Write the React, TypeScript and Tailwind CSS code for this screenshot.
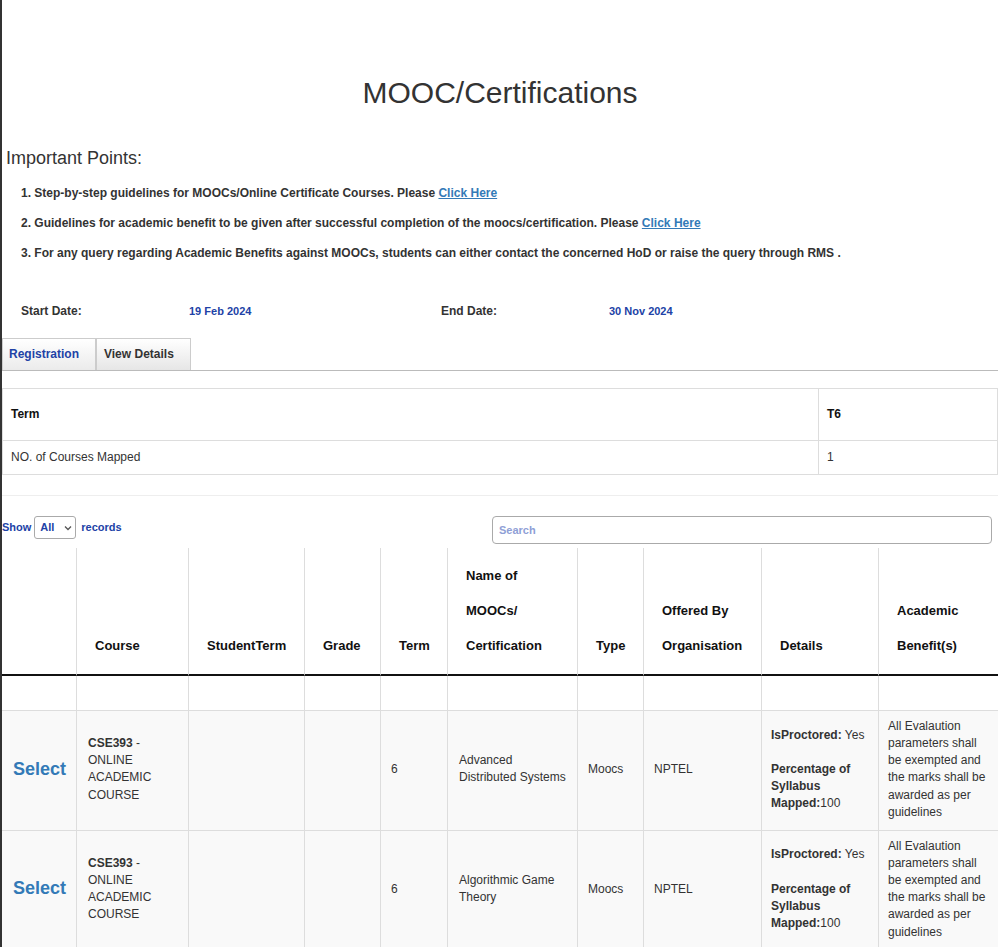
import React from "react";

const rows = [
  { name: ["Advanced", "Distributed Systems"] },
  { name: ["Algorithmic Game", "Theory"] },
];

const colWidths = [74, 112, 116, 76, 67, 130, 66, 118, 117, 120];

function HeaderCell({ lines, first }: { lines: string[]; first?: boolean }) {
  return (
    <th
      className={
        "align-bottom text-left text-[13px] font-bold leading-[35px] pt-[10px] pb-[11px] pl-[18px] pr-[4px] border-b-2 border-[#111] text-[#111] whitespace-nowrap " +
        (first ? "" : "border-l border-l-[#ddd]")
      }
    >
      {lines.map((l, i) => (
        <React.Fragment key={i}>
          {i > 0 && <br />}
          {l}
        </React.Fragment>
      ))}
    </th>
  );
}

export default function App() {
  return (
    <div className="min-h-[947px] bg-white border-l-2 border-[#333] overflow-hidden text-[#333] [font-family:'Liberation_Sans',Arial,Helvetica,sans-serif]">
      <h1 className="mt-[76px] text-center text-[30px] leading-[33px] font-normal text-[#333]">
        MOOC/Certifications
      </h1>

      <div className="mt-[39px] pl-[4px] text-[18px] leading-[20px] text-[#333]">
        Important Points:
      </div>

      <div className="mt-[10px] pl-[19px] text-[12px] font-bold leading-[30px] text-[#333]">
        <div>
          1. Step-by-step guidelines for MOOCs/Online Certificate Courses. Please{" "}
          <a className="text-[#337ab7] underline" href="#">
            Click Here
          </a>
        </div>
        <div>
          2. Guidelines for academic benefit to be given after successful completion of the moocs/certification. Please{" "}
          <a className="text-[#337ab7] underline" href="#">
            Click Here
          </a>
        </div>
        <div>
          3. For any query regarding Academic Benefits against MOOCs, students can either contact the concerned HoD or raise the query through RMS .
        </div>
      </div>

      <div className="mt-[33px] flex items-center pl-[19px] leading-[20px] font-bold">
        <div className="w-[168px] text-[12px] text-[#333]">Start Date:</div>
        <div className="w-[252px] text-[11px] text-[#2142a6]">19 Feb 2024</div>
        <div className="w-[168px] text-[12px] text-[#333]">End Date:</div>
        <div className="text-[11px] text-[#2142a6]">30 Nov 2024</div>
      </div>

      <div className="mt-[17px] flex border-b border-[#bbb]">
        <div className="flex h-[32px] w-[94px] items-center border border-b-0 border-[#ccc] bg-linear-to-b from-white to-[#ebebeb] pb-[2px] pl-[6px] text-[12px] font-bold text-[#2142a6]">
          Registration
        </div>
        <div className="flex h-[32px] w-[95px] items-center border border-b-0 border-[#ccc] bg-linear-to-b from-white to-[#e6e6e6] pb-[2px] pl-[7px] text-[12px] font-bold text-[#333]">
          View Details
        </div>
      </div>

      <div className="mt-[17px] border border-[#ddd] text-[12px]">
        <div className="flex h-[52px] border-b border-[#ddd]">
          <div className="flex w-[816px] items-center border-r border-[#ddd] pb-[2px] pl-[8px] font-bold text-[#111]">
            Term
          </div>
          <div className="flex items-center pb-[2px] pl-[8px] font-bold text-[#111]">T6</div>
        </div>
        <div className="flex h-[33px]">
          <div className="flex w-[816px] items-center border-r border-[#ddd] pb-[2px] pl-[8px] text-[#333]">
            NO. of Courses Mapped
          </div>
          <div className="flex items-center pb-[2px] pl-[8px] text-[#333]">1</div>
        </div>
      </div>

      <div className="mt-[20px] h-px bg-[#eee]" />

      <div className="mt-[20px] flex items-start">
        <div className="flex h-[23px] items-center text-[11px] font-bold text-[#2142a6]">
          <span>Show</span>
          <div className="ml-[3px] flex h-[23px] w-[42px] items-center rounded-[3px] border border-[#aaa] pl-[5px] text-[#2142a6]">
            <span>All</span>
            <svg className="ml-[10px]" width="8" height="6" viewBox="0 0 8 6">
              <path d="M1 1.5 L4 4.5 L7 1.5" fill="none" stroke="#555" strokeWidth="1.3" />
            </svg>
          </div>
          <span className="ml-[5px]">records</span>
        </div>
        <div className="ml-auto mr-[6px] flex h-[28px] w-[500px] items-center rounded-[4px] border border-[#aaa] pl-[6px] text-[11px] font-bold text-[#8fa0d6]">
          Search
        </div>
      </div>

      <table className="mt-[4px] w-[996px] table-fixed border-separate border-spacing-0 text-[12px] leading-[1.42857]">
        <colgroup>
          {colWidths.map((w, i) => (
            <col key={i} style={{ width: w }} />
          ))}
        </colgroup>
        <thead>
          <tr>
            <HeaderCell lines={[""]} first />
            <HeaderCell lines={["Course"]} />
            <HeaderCell lines={["StudentTerm"]} />
            <HeaderCell lines={["Grade"]} />
            <HeaderCell lines={["Term"]} />
            <HeaderCell lines={["Name of", "MOOCs/", "Certification"]} />
            <HeaderCell lines={["Type"]} />
            <HeaderCell lines={["Offered By", "Organisation"]} />
            <HeaderCell lines={["Details"]} />
            <HeaderCell lines={["Academic", "Benefit(s)"]} />
          </tr>
        </thead>
        <tbody>
          <tr>
            {colWidths.map((_, i) => (
              <td key={i} className={"h-[34px] " + (i > 0 ? "border-l border-[#ddd]" : "")} />
            ))}
          </tr>
          {rows.map((r, idx) => (
            <tr key={idx} className="bg-[#f9f9f9]">
              <td className="border-t border-[#ddd] pt-[7px] pb-[9px] pl-[11px] align-middle">
                <a href="#" className="text-[18px] font-bold text-[#337ab7]">
                  Select
                </a>
              </td>
              <td className="border-t border-l border-[#ddd] pt-[7px] pb-[9px] pl-[11px] align-middle text-[#333]">
                <b>CSE393</b> -<br />
                ONLINE
                <br />
                ACADEMIC
                <br />
                COURSE
              </td>
              <td className="border-t border-l border-[#ddd]" />
              <td className="border-t border-l border-[#ddd]" />
              <td className="border-t border-l border-[#ddd] pt-[7px] pb-[9px] pl-[10px] align-middle text-[#333]">6</td>
              <td className="border-t border-l border-[#ddd] pt-[7px] pb-[9px] pl-[11px] align-middle whitespace-nowrap text-[#333]">
                {r.name[0]}
                <br />
                {r.name[1]}
              </td>
              <td className="border-t border-l border-[#ddd] pt-[7px] pb-[9px] pl-[10px] align-middle text-[#333]">Moocs</td>
              <td className="border-t border-l border-[#ddd] pt-[7px] pb-[9px] pl-[10px] align-middle text-[#333]">NPTEL</td>
              <td className="border-t border-l border-[#ddd] pt-[7px] pb-[9px] pl-[9px] align-middle whitespace-nowrap text-[#333]">
                <b>IsProctored:</b> Yes
                <br />
                <br />
                <b>Percentage of</b>
                <br />
                <b>Syllabus</b>
                <br />
                <b>Mapped:</b>100
              </td>
              <td className="border-t border-l border-[#ddd] pt-[7px] pb-[9px] pl-[9px] align-middle whitespace-nowrap text-[#333]">
                All Evalaution
                <br />
                parameters shall
                <br />
                be exempted and
                <br />
                the marks shall be
                <br />
                awarded as per
                <br />
                guidelines
              </td>
            </tr>
          ))}
        </tbody>
      </table>
    </div>
  );
}
